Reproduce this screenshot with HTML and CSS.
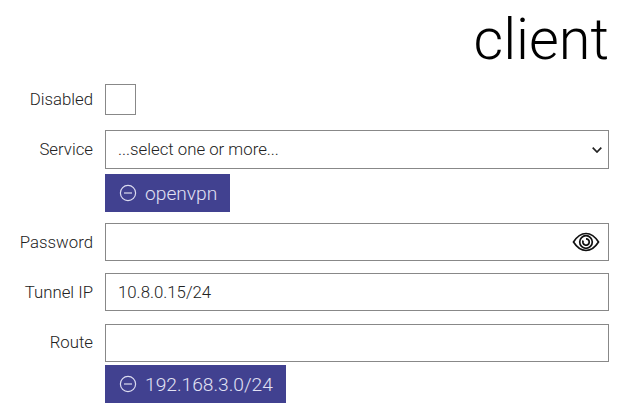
FILE: index.html
```html
<!DOCTYPE html>
<html lang="en">
<head>
    <meta charset="UTF-8">
    <title>client</title>
    <link rel="stylesheet" href="styles.css">
</head>
<body>
    <h1 class="title">client</h1>
    <form class="form">
        <div class="row row-disabled">
            <label class="label">Disabled</label>
            <input class="check" type="checkbox">
        </div>
        <div class="row row-service">
            <label class="label">Service</label>
            <div class="field">
                <select class="input select">
                    <option>...select one or more...</option>
                </select>
                <svg class="chevron" viewBox="0 0 10 6"><path d="M.7.7L5 5 9.300.7"/></svg>
                <div class="chip">
                    <svg class="chip-icon" viewBox="0 0 18 18"><circle cx="9" cy="9" r="7.600"/><path d="M5 9h8"/></svg>
                    openvpn
                </div>
            </div>
        </div>
        <div class="row row-password">
            <label class="label">Password</label>
            <div class="field password">
                <input class="input" type="text">
                <svg class="eye" viewBox="0 0 28 20">
                    <path d="M1.500 10C5 4.500 9 1.500 14 1.500s9 3 12.500 8.500C23 15.500 19 18.500 14 18.500S5 15.500 1.500 10z"/>
                    <circle cx="14" cy="10" r="6.300"/>
                    <path d="M11.200 8.500a3.200 3.200 0 1 0 2.800-1.700"/>
                </svg>
            </div>
        </div>
        <div class="row row-tunnel">
            <label class="label">Tunnel IP</label>
            <div class="field">
                <input class="input" type="text" value="10.8.0.15/24">
            </div>
        </div>
        <div class="row">
            <label class="label route-label">Route</label>
            <div class="field">
                <input class="input" type="text">
                <div class="chip chip-route">
                    <svg class="chip-icon" viewBox="0 0 18 18"><circle cx="9" cy="9" r="7.600"/><path d="M5 9h8"/></svg>
                    192.168.3.0/24
                </div>
            </div>
        </div>
    </form>
</body>
</html>
```

FILE: styles.css
```css
* {
    margin: 0;
    padding: 0;
    box-sizing: border-box;
}

body {
    background-color: #fff;
    color: #212529;
    font-family: Roboto, sans-serif;
    font-size: 16.8px;
    font-weight: 300;
    padding: 0 20px 0 0;
}

.title {
    font-size: 57.6px;
    font-weight: 300;
    line-height: 66px;
    color: #000;
    text-align: right;
    height: 84px;
    padding-top: 7px;
}

.row {
    display: flex;
    align-items: flex-start;
    margin-bottom: 12px;
}

.row-disabled {
    margin-bottom: 15px;
}

.row-service {
    margin-bottom: 11px;
}

.row-tunnel {
    margin-bottom: 13px;
}

.label {
    flex: 0 0 93px;
    text-align: right;
    line-height: 38px;
    margin-right: 12px;
    color: #222;
}

.row-disabled .label {
    line-height: 31px;
}

.route-label {
    line-height: 37px;
}

.check {
    appearance: none;
    width: 31px;
    height: 31px;
    border: 1px solid #888;
    background: #fff;
}

.field {
    flex: 1;
    position: relative;
}

.input {
    display: block;
    width: 100%;
    height: 38px;
    border: 1px solid #888;
    border-radius: 0;
    background-color: #fff;
    font-family: inherit;
    font-size: 16.8px;
    font-weight: 300;
    color: #222;
    padding: 0 12px;
    outline: none;
}

.select {
    appearance: none;
    height: 39px;
    padding-bottom: 1px;
}

.chevron {
    position: absolute;
    right: 7px;
    top: 17px;
    width: 10px;
    height: 6px;
    fill: none;
    stroke: #222;
    stroke-width: 1.700;
}

.chip {
    display: inline-flex;
    align-items: center;
    height: 38px;
    margin-top: 5px;
    padding: 0 13px 0 14px;
    background-color: #414190;
    color: #e2e2f4;
    font-size: 19.2px;
    gap: 8px;
}

.row .chip-route {
    margin-top: 3px;
}

.chip-icon {
    width: 18px;
    height: 18px;
    fill: none;
    stroke: #dcdcf0;
    stroke-width: 1.200;
}

.eye {
    position: absolute;
    right: 9px;
    top: 9px;
    width: 28px;
    height: 20px;
    fill: none;
    stroke: #111;
    stroke-width: 1.700;
}
```
